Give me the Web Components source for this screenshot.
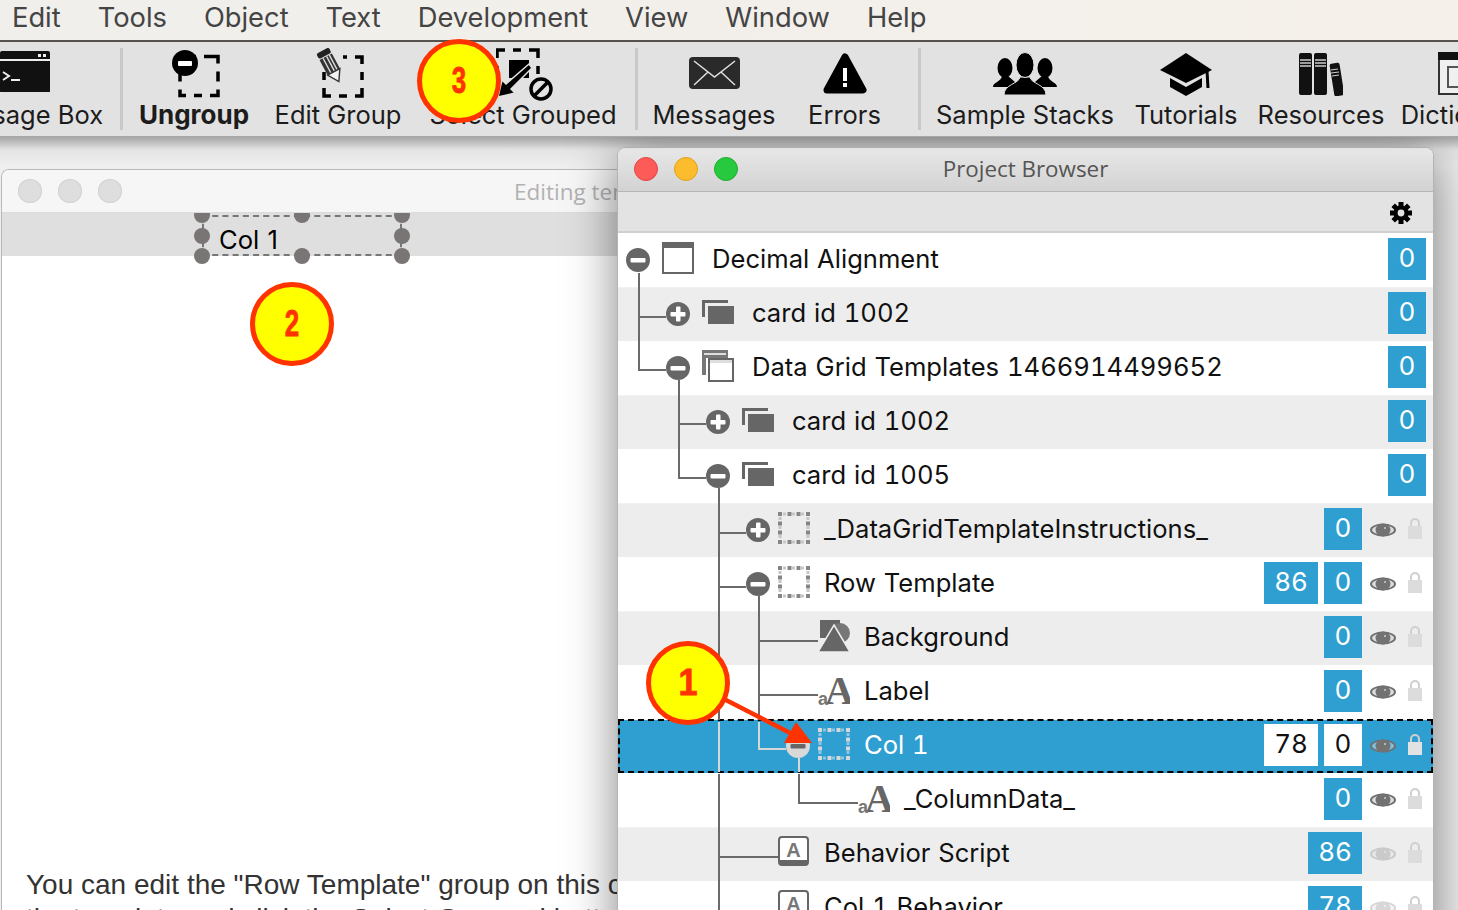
<!DOCTYPE html>
<html>
<head>
<meta charset="utf-8">
<title>Project Browser</title>
<style>
    html, body { margin: 0; height: 910px; overflow: hidden; background: #ebebeb; }
    body { font-family: Inter, "Liberation Sans", sans-serif; }
    #page { position: relative; width: 1458px; height: 910px; overflow: hidden; display: flex; flex-direction: column; }
    #arrow { position: absolute; left: 0; top: 0; }
    tool-item svg { display: block; }
</style>
</head>
<body>
<div id="page">
    <menu-bar>
        <span>Edit</span><span>Tools</span><span>Object</span><span>Text</span><span>Development</span><span>View</span><span>Window</span><span>Help</span>
    </menu-bar>

    <tool-bar>
        <tool-item w="164" style="margin-right:16px">
            <svg slot="icon" width="50" height="42" viewBox="0 0 50 42" style="margin-left:6px"><rect width="50" height="42" rx="2" fill="#111" y="1"/><rect y="9" width="50" height="2" fill="#eee"/><rect x="38" y="4" width="3" height="3" fill="#eee"/><rect x="43" y="4" width="3" height="3" fill="#eee"/><path d="M3 22l6 4-6 4" fill="none" stroke="#eee" stroke-width="2"/><rect x="11" y="29" width="9" height="2" fill="#eee"/></svg>
            Message Box
        </tool-item>
        <tool-sep></tool-sep>
        <tool-item w="142" bold>
            <svg slot="icon" width="48" height="48" viewBox="0 0 48 48" style="margin-left:4px"><path d="M8 14V7M16 7H24M32 7H46V14M46 22V32M46 40V46H38M30 46H22M14 46H8V40M8 32V24" transform="translate(0,-.5)" fill="none" stroke="#000" stroke-width="3.5"/><circle cx="13" cy="13" r="13" fill="#000"/><rect x="6" y="11" width="14" height="5" rx="1" fill="#fff"/></svg>
            Ungroup
        </tool-item>
        <tool-item w="146">
            <svg slot="icon" width="48" height="50" viewBox="0 0 48 50" style="margin-left:4px;margin-top:-2px"><path d="M8 24V32M8 40V48H15M23 48H31M39 48H46V40M46 32V24M46 16V9H39M31 9H27" fill="none" stroke="#000" stroke-width="3.5"/><g transform="translate(13,15) rotate(-28)"><rect x="-7" y="-14" width="14" height="6" rx="2" fill="#222"/><rect x="-7" y="-7" width="14" height="17" fill="#333"/><path d="M-3 -7V10M1 -7V10M4 -7V10" stroke="#ddd" stroke-width="1.4"/><path d="M-7 10H7L0 21Z" fill="#f2f2f2" stroke="#333" stroke-width="1.4"/></g></svg>
            Edit Group
        </tool-item>
        <tool-item w="224">
            <svg slot="icon" width="58" height="54" viewBox="0 0 58 54" style="margin-left:4px;margin-top:-2px"><path d="M1 10V2H9M17 2H25M33 2H42V10M42 18V26M1 18V26M1 34V44H9" fill="none" stroke="#000" stroke-width="3.5"/><rect x="13" y="12" width="20" height="18" fill="#000"/><path d="M33 16L10 36 6 32 2 49 19 45 15 41 36 20Z" fill="#000" stroke="#e2e2e2" stroke-width="1.5"/><circle cx="45" cy="41" r="10" fill="#e2e2e2" stroke="#000" stroke-width="3.5"/><path d="M38 48L52 34" stroke="#000" stroke-width="3.5"/></svg>
            Select Grouped
        </tool-item>
        <tool-sep></tool-sep>
        <tool-item w="152">
            <svg slot="icon" width="51" height="48" viewBox="0 0 51 48"><rect y="7" width="51" height="32" rx="4" fill="#2a2a2a"/><path d="M5 11L25.5 27 46 11M5 35L19 22M46 35L32 22" fill="none" stroke="#e0e0e0" stroke-width="1.5"/></svg>
            Messages
        </tool-item>
        <tool-item w="109" style="margin-right:19px">
            <svg slot="icon" width="46" height="48" viewBox="0 0 46 48"><path d="M23 7L41 40H5Z" fill="#000" stroke="#000" stroke-width="7" stroke-linejoin="round"/><rect x="21" y="18" width="4" height="13" fill="#fff"/><rect x="21" y="33" width="4" height="4" fill="#fff"/></svg>
            Errors
        </tool-item>
        <tool-sep></tool-sep>
        <tool-item w="208">
            <svg slot="icon" width="64" height="46" viewBox="0 0 64 46"><g fill="#000"><ellipse cx="12" cy="18" rx="7.5" ry="10"/><path d="M0 37C0 32 8 32 9 26H15L22 32 18 37Z"/><ellipse cx="52" cy="18" rx="7.5" ry="10"/><path d="M64 37C64 32 56 32 55 26H49L42 32 46 37Z"/><path d="M11 45C11 34 26 34 27 27H37C38 34 53 34 53 45Z" stroke="#e2e2e2" stroke-width="1"/><ellipse cx="32" cy="15" rx="9" ry="12.5" stroke="#e2e2e2" stroke-width="1"/></g></svg>
            Sample Stacks
        </tool-item>
        <tool-item w="114">
            <svg slot="icon" width="54" height="46" viewBox="0 0 54 46"><path d="M27 3L53 20 27 33 1 20Z" fill="#000"/><path d="M11 28L27 37 43 28V37L27 46 11 37Z" fill="#000"/><path d="M48 21L49 38" stroke="#000" stroke-width="3"/></svg>
            Tutorials
        </tool-item>
        <tool-item w="156">
            <svg slot="icon" width="44" height="46" viewBox="0 0 44 46"><rect y="3" width="13" height="42" rx="2" fill="#111"/><rect x="15" y="3" width="13" height="42" rx="2" fill="#111"/><rect x="33" y="13" width="10" height="33" rx="2" fill="#111" transform="rotate(-9 38 30)"/><path d="M1 10H12M1 13H12M1 16H12M16 10H27M16 13H27M16 16H27" stroke="#ccc" stroke-width="1.4"/><path d="M32 20L39 19M32 23L40 22M33 26L40 25" stroke="#ccc" stroke-width="1.2"/></svg>
            Resources
        </tool-item>
        <tool-item w="126">
            <svg slot="icon" width="56" height="46" viewBox="0 0 56 46" style="margin-left:8px"><rect x="1" y="3" width="54" height="41" fill="#f0f0f0" stroke="#333" stroke-width="2"/><rect y="2" width="56" height="8" fill="#111"/><rect x="10" y="17" width="36" height="20" fill="none" stroke="#555" stroke-width="2"/></svg>
            Dictionary
        </tool-item>
    </tool-bar>

    <desk-top>
        <editor-window title-text="Editing template">
            <selection-box>Col 1</selection-box>
            <span slot="note">You can edit the "Row Template" group on this card.</span>
            <span slot="note">the template and click the Select Grouped button to</span>
        </editor-window>

        <project-browser title-text="Project Browser">
            <tree-row label="Decimal Alignment" level="0" icon="stack" exp="minus" nums="0"></tree-row>
            <tree-row label="card id 1002" level="1" icon="card" exp="plus" nums="0"></tree-row>
            <tree-row label="Data Grid Templates 1466914499652" level="1" icon="cardopen" exp="minus" nums="0"></tree-row>
            <tree-row label="card id 1002" level="2" icon="card" exp="plus" nums="0"></tree-row>
            <tree-row label="card id 1005" level="2" icon="card" exp="minus" nums="0"></tree-row>
            <tree-row label="_DataGridTemplateInstructions_" level="3" icon="group" exp="plus" nums="0" eye="on"></tree-row>
            <tree-row label="Row Template" level="3" icon="group" exp="minus" nums="86,0" eye="on"></tree-row>
            <tree-row label="Background" level="4" icon="graphic" nums="0" eye="on"></tree-row>
            <tree-row label="Label" level="4" icon="field" nums="0" eye="on"></tree-row>
            <tree-row label="Col 1" level="4" icon="group" exp="minus" nums="78,0" eye="on" selected></tree-row>
            <tree-row label="_ColumnData_" level="5" icon="field" nums="0" eye="on"></tree-row>
            <tree-row label="Behavior Script" level="3" icon="script" nums="86" eye="off"></tree-row>
            <tree-row label="Col 1 Behavior" level="3" icon="script" nums="78" eye="off"></tree-row>
        </project-browser>
    </desk-top>

    <svg id="arrow" width="1458" height="910" viewBox="0 0 1458 910">
        <path d="M722 698L796 736" stroke="#ff3300" stroke-width="4.5"/>
        <path d="M796 722L812 743H784Z" fill="#ff3300"/>
    </svg>
    <call-out x="688" y="683">1</call-out>
    <call-out x="292" y="324" narrow>2</call-out>
    <call-out x="459" y="81" narrow>3</call-out>
</div>

<script>
class MenuBar extends HTMLElement {
    constructor() {
        super();
        this.attachShadow({ mode: 'open' });
        this.shadowRoot.innerHTML = `
            <style>
                :host {
                    display: flex;
                    flex: none;
                    gap: 37px;
                    height: 42px;
                    padding-left: 12px;
                    padding-bottom: 6px;
                    align-items: center;
                    box-sizing: border-box;
                    background: linear-gradient(90deg, #f0efeb, #f5f0ea);
                    border-bottom: 2px solid #55524f;
                    color: #444;
                    font: 400 27.3px Inter, "Liberation Sans", sans-serif;
                }
            </style>
            <slot></slot>
        `;
    }
}

class ToolBar extends HTMLElement {
    constructor() {
        super();
        this.attachShadow({ mode: 'open' });
        this.shadowRoot.innerHTML = `
            <style>
                :host {
                    display: flex;
                    flex: none;
                    height: 95px;
                    box-sizing: border-box;
                    margin-left: -60px;
                    width: 1560px;
                    padding-top: 8px;
                    background: #e2e2e2;
                    border-bottom: 1px solid #a8a8a8;
                }
            </style>
            <slot></slot>
        `;
    }
}

class ToolItem extends HTMLElement {
    constructor() {
        super();
        this.attachShadow({ mode: 'open' });
    }

    connectedCallback() {
        const width = this.getAttribute('w');
        const bold = this.hasAttribute('bold');
        this.shadowRoot.innerHTML = `
            <style>
                :host {
                    display: flex;
                    flex: none;
                    flex-direction: column;
                    align-items: center;
                    width: ${width}px;
                    white-space: nowrap;
                    color: #1c1c1c;
                    font: ${bold ? '700 26px' : '400 25.5px'} Inter, "Liberation Sans", sans-serif;
                }
                .icon { height: 48px; display: flex; align-items: flex-start; justify-content: center; }
                .text { line-height: 34px; }
            </style>
            <div class="icon"><slot name="icon"></slot></div>
            <div class="text"><slot></slot></div>
        `;
    }
}

class ToolSep extends HTMLElement {
    constructor() {
        super();
        this.attachShadow({ mode: 'open' });
        this.shadowRoot.innerHTML = `
            <style>
                :host {
                    display: block;
                    flex: none;
                    width: 3px;
                    height: 82px;
                    margin-top: -2px;
                    background: #c8c8c8;
                }
            </style>
        `;
    }
}

class DeskTop extends HTMLElement {
    constructor() {
        super();
        this.attachShadow({ mode: 'open' });
        this.shadowRoot.innerHTML = `
            <style>
                :host {
                    display: block;
                    position: relative;
                    flex: 1;
                    overflow: hidden;
                    background: linear-gradient(#bdbdbd 0, #e4e4e4 12px, #efefef 30px);
                }
                .shade { position: absolute; left: 0; right: 0; top: 0; height: 14px; background: linear-gradient(rgba(0,0,0,.12), rgba(0,0,0,0)); z-index: 5; }
            </style>
            <slot></slot>
            <div class="shade"></div>
        `;
    }
}

class EditorWindow extends HTMLElement {
    constructor() {
        super();
        this.attachShadow({ mode: 'open' });
    }

    connectedCallback() {
        // only the part left of the Project Browser shows, so the window stops at its edge
        this.shadowRoot.innerHTML = `
            <style>
                :host {
                    display: flex;
                    flex-direction: column;
                    position: absolute;
                    left: 1px;
                    top: 32px;
                    width: 616px;
                    height: 800px;
                    background: #fff;
                    border: 1px solid #b8b8b8;
                    border-right: 0;
                    border-radius: 8px 0 0 0;
                    overflow: hidden;
                }
                .title {
                    display: flex;
                    flex: none;
                    align-items: center;
                    height: 43px;
                    gap: 16px;
                    padding-left: 16px;
                    background: #f6f6f6;
                    border-bottom: 1px solid #dcdcdc;
                    box-sizing: border-box;
                    white-space: nowrap;
                    overflow: hidden;
                }
                .dot { flex: none; width: 24px; height: 24px; border-radius: 50%; background: #dedede; box-shadow: inset 0 0 0 1px #d2d2d2; }
                .name { margin-left: 376px; color: #b2b2b2; font: 22.5px "Open Sans", "Liberation Sans", sans-serif; }
                .header {
                    flex: none;
                    height: 43px;
                    background: #dfdfdf;
                    padding-left: 200px;
                    position: relative;
                    clip-path: inset(0 0 -20px 0);
                }
                .body { flex: 1; display: flex; flex-direction: column; justify-content: flex-end; padding: 0 0 0 24px; overflow: hidden; }
                .note { display: flex; flex-direction: column; margin-bottom: 34px; color: #333; font: 28px/34px "Liberation Sans", sans-serif; white-space: nowrap; }
                ::slotted(span) { display: block; }
            </style>
            <div class="title">
                <div class="dot"></div><div class="dot"></div><div class="dot"></div>
                <div class="name">${this.getAttribute('title-text')}</div>
            </div>
            <div class="header"><slot></slot></div>
            <div class="body"><div class="note"><slot name="note"></slot></div></div>
        `;
    }
}

class SelectionBox extends HTMLElement {
    constructor() {
        super();
        this.attachShadow({ mode: 'open' });
        const spots = [
            [0, 0], [50, 0], [100, 0],
            [0, 50], [100, 50],
            [0, 100], [50, 100], [100, 100]
        ];
        const handles = spots.map(s => `<i style="left:${s[0]}%;top:${s[1]}%"></i>`).join('');
        this.shadowRoot.innerHTML = `
            <style>
                :host {
                    display: block;
                    position: relative;
                    box-sizing: border-box;
                    width: 200px;
                    height: 41px;
                    margin-top: 2px;
                    padding: 0 0 0 15px;
                    border: 2px dashed #777;
                    color: #000;
                    font: 400 25.6px/45px Inter, "Liberation Sans", sans-serif;
                    word-spacing: 1px;
                }
                .handles { position: absolute; inset: -2px; }
                i {
                    position: absolute;
                    width: 16px;
                    height: 16px;
                    margin: -8px 0 0 -8px;
                    border-radius: 50%;
                    background: #787574;
                }
            </style>
            <slot></slot>
            <div class="handles">${handles}</div>
        `;
    }
}

class ProjectBrowser extends HTMLElement {
    constructor() {
        super();
        this.attachShadow({ mode: 'open' });
    }

    connectedCallback() {
        const dark = '#6a6a6a';
        const light = '#d6d6d6';
        this.shadowRoot.innerHTML = `
            <style>
                :host {
                    display: flex;
                    flex-direction: column;
                    position: absolute;
                    left: 618px;
                    top: 11px;
                    width: 815px;
                    height: 820px;
                    border-radius: 8px 8px 0 0;
                    background: #fff;
                    box-shadow: 0 0 0 1px #b4b4b4, 0 8px 50px rgba(0, 0, 0, .5);
                }
                .title {
                    display: flex;
                    flex: none;
                    position: relative;
                    align-items: center;
                    justify-content: center;
                    height: 44px;
                    padding-bottom: 2px;
                    box-sizing: border-box;
                    border-radius: 8px 8px 0 0;
                    border-bottom: 1px solid #b6b6b6;
                    background: linear-gradient(#e8e8e8, #d2d2d2);
                    color: #555;
                    font: 22.4px "Open Sans", "Liberation Sans", sans-serif;
                }
                .lights { position: absolute; left: 16px; top: 9px; display: flex; gap: 16px; }
                .lights i { width: 24px; height: 24px; border-radius: 50%; box-sizing: border-box; }
                .bar {
                    display: flex;
                    flex: none;
                    justify-content: flex-end;
                    align-items: center;
                    height: 41px;
                    box-sizing: border-box;
                    padding: 2px 21px 0 0;
                    background: #e3e3e3;
                    border-bottom: 2px solid #cfcfcf;
                }
                .rows { position: relative; display: block; }
                .lines { position: absolute; left: 0; top: 0; pointer-events: none; }
            </style>
            <div class="title">
                <div class="lights">
                    <i style="background:#fc5b57;border:1px solid #e2463f"></i>
                    <i style="background:#fdbc2e;border:1px solid #e1a116"></i>
                    <i style="background:#27c93f;border:1px solid #1dad2b"></i>
                </div>
                ${this.getAttribute('title-text')}
            </div>
            <div class="bar">
                <svg width="22" height="22" viewBox="0 0 22 22">
                    <g stroke="#000" stroke-width="5">
                        <path d="M11 0V22M0 11H22M3.2 3.2L18.8 18.8M18.8 3.2L3.2 18.8"/>
                    </g>
                    <circle cx="11" cy="11" r="7.5" fill="#000"/>
                    <circle cx="11" cy="11" r="3.4" fill="#e3e3e3"/>
                </svg>
            </div>
            <div class="rows">
                <slot></slot>
                <svg class="lines" width="815" height="702" viewBox="618 233 815 702" fill="none" stroke-width="2">
                    <path stroke="${dark}" d="M639 273V370H666M639 317H666"/>
                    <path stroke="${dark}" d="M679 380V478H706M679 424H706"/>
                    <path stroke="${dark}" d="M719 488V720M719 533H746M719 587H746"/>
                    <path stroke="${dark}" d="M759 596V720M759 641H818M759 695H818"/>
                    <path stroke="${light}" d="M759 722V749H786M719 722V772"/>
                    <path stroke="${light}" d="M799 758V772"/>
                    <path stroke="${dark}" d="M799 774V803H858"/>
                    <path stroke="${dark}" d="M719 774V935M719 857H778M719 911H778"/>
                </svg>
            </div>
        `;
    }
}

// the "group" icon is a ring of small squares, dark ones with paler ones between
function dottedSquare() {
    const dark = [0, 9.5, 18.5, 28];
    const pale = [5, 14, 23];
    let out = '';
    const dot = (x, y, size, fill) => `<rect x="${x}" y="${y}" width="${size}" height="${size}" fill="var(${fill})"/>`;
    dark.forEach(p => {
        out += dot(p, 0, 4, '--dots') + dot(p, 28, 4, '--dots');
        out += dot(0, p, 4, '--dots') + dot(28, p, 4, '--dots');
    });
    pale.forEach(p => {
        out += dot(p, 0.5, 3, '--dim') + dot(p, 28.5, 3, '--dim');
        out += dot(0.5, p, 3, '--dim') + dot(28.5, p, 3, '--dim');
    });
    return out;
}

const ROW_ICONS = {
    stack: `<rect x="1" y="1" width="30" height="30" fill="#fff" stroke="#666" stroke-width="2"/><rect width="32" height="6" fill="#666"/>`,
    card: `<path d="M0 4H26V7H3V21H0Z" fill="#666"/><rect x="6" y="10" width="26" height="18" fill="#666"/>`,
    cardopen: `<path d="M0 0H26V8H4V25H0Z" fill="#777"/><path d="M2 3H24V5H2Z" fill="#ddd"/><rect x="7" y="9" width="24" height="22" fill="#fff" stroke="#666" stroke-width="2"/><rect x="8" y="10" width="22" height="3" fill="#ddd"/>`,
    group: dottedSquare(),
    graphic: `<rect x="2" y="0" width="20" height="18" fill="#666"/><circle cx="22" cy="13" r="10" fill="#777"/><path d="M16 5L32 32H0Z" fill="#666" stroke="#eee" stroke-width="1.5"/>`,
    field: `<text x="7" y="30" font-family="Liberation Serif" font-weight="700" font-size="40" fill="#666">A</text><text x="0" y="31" font-family="Liberation Sans" font-weight="700" font-size="18" fill="#777">a</text>`,
    script: `<rect x="1" y="1" width="29" height="28" rx="3" fill="#fff" stroke="#666" stroke-width="2"/><rect x="1" y="24" width="29" height="5" rx="1" fill="#666"/><text x="15.5" y="21" text-anchor="middle" font-family="Liberation Sans" font-weight="700" font-size="20" fill="#777">A</text>`
};

class TreeRow extends HTMLElement {
    constructor() {
        super();
        this.attachShadow({ mode: 'open' });
    }

    connectedCallback() {
        const level = Number(this.getAttribute('level'));
        const selected = this.hasAttribute('selected');
        const exp = this.getAttribute('exp');
        const eye = this.getAttribute('eye');
        const nums = this.getAttribute('nums').split(',');
        // icon left edge per tree level, measured from the window's left side
        const iconLeft = [44, 84, 124, 160, 200, 240][level];
        const deep = level >= 3;

        const expander = exp ? `
            <svg class="exp" width="24" height="24" viewBox="0 0 24 24">
                <circle cx="12" cy="12" r="12" fill="${selected ? '#d8d8d8' : '#666'}"/>
                <rect x="4.5" y="10" width="15" height="4.5" rx="1" fill="${selected ? '#666' : '#fff'}"/>
                ${exp === 'plus' ? '<rect x="10" y="4.5" width="4.5" height="15" rx="1" fill="#fff"/>' : ''}
            </svg>` : '';

        const badges = nums.map(n => `<div class="badge ${n.length > 1 ? 'wide' : ''}">${n}</div>`).join('');

        const extras = eye ? `
            <svg class="eye ${eye}" width="26" height="14" viewBox="0 0 26 14">
                <ellipse cx="13" cy="7" rx="13" ry="6.5" fill="#6f6f6f"/>
                <ellipse cx="13" cy="7" rx="11" ry="4.5" fill="${selected ? '#7fc0e0' : '#ddd'}"/>
                <ellipse cx="13" cy="7" rx="7.5" ry="6.5" fill="#727272"/>
                <circle cx="15" cy="5" r="1" fill="#ccc"/>
            </svg>
            <svg class="lock" width="14" height="21" viewBox="0 0 14 21">
                <path d="M3 9V5a4 4 0 0 1 8 0V9" fill="none" stroke="#cfcfcf" stroke-width="2"/>
                <rect y="8" width="14" height="13" fill="${selected ? '#e2e2e2' : '#dcdcdc'}"/>
            </svg>` : '';

        this.shadowRoot.innerHTML = `
            <style>
                :host {
                    display: flex;
                    align-items: center;
                    height: 54px;
                    box-sizing: border-box;
                    padding-right: ${eye ? 11 : 7}px;
                    background: #fff;
                    color: #111;
                    --dots: #858585;
                    --dim: #c6c6c6;
                    font: 400 25.6px Inter, "Liberation Sans", sans-serif;
                    font-variant-numeric: tabular-nums;
                    word-spacing: 1px;
                }
                :host(:nth-child(even)) {
                    background: #ededed;
                    box-shadow: inset 0 1px 0 #f2f2f2;
                }
                :host([selected]) {
                    background: #2f9fd2 !important;
                    color: #fff;
                    outline: 2px dashed #000;
                    outline-offset: -2px;
                    --dots: #d8d8d8;
                    --dim: #8cc6e2;
                }
                .lead {
                    display: flex;
                    flex: none;
                    justify-content: flex-end;
                    width: ${iconLeft}px;
                }
                .exp { margin-right: ${deep ? 8 : 12}px; }
                .icon { flex: none; margin-top: -5px; }
                .label { margin-left: ${deep ? 14 : 18}px; padding-bottom: 4px; white-space: nowrap; flex: 1; }
                .badge {
                    flex: none;
                    width: 38px;
                    height: 42px;
                    margin-left: 6px;
                    margin-top: -2px;
                    background: #2f9fd2;
                    color: #fff;
                    text-align: center;
                    font-size: 26px;
                    line-height: 39px;
                }
                .badge.wide { width: 54px; }
                :host([selected]) .badge { background: #fff; color: #111; }
                .eye { flex: none; margin-left: 8px; }
                .eye.off { opacity: .28; }
                .lock { flex: none; margin-left: 12px; margin-top: -4px; }
            </style>
            <div class="lead">${expander}</div>
            <svg class="icon" width="32" height="32" viewBox="0 0 32 32">${ROW_ICONS[this.getAttribute('icon')]}</svg>
            <div class="label">${this.getAttribute('label')}</div>
            ${badges}
            ${extras}
        `;
    }
}

class CallOut extends HTMLElement {
    constructor() {
        super();
        this.attachShadow({ mode: 'open' });
    }

    connectedCallback() {
        const x = Number(this.getAttribute('x'));
        const y = Number(this.getAttribute('y'));
        const squeeze = this.hasAttribute('narrow') ? 0.72 : 0.95;
        this.shadowRoot.innerHTML = `
            <style>
                :host {
                    display: flex;
                    position: absolute;
                    left: ${x - 42}px;
                    top: ${y - 42}px;
                    width: 84px;
                    height: 84px;
                    box-sizing: border-box;
                    align-items: center;
                    justify-content: center;
                    border: 5px solid #ff3300;
                    border-radius: 50%;
                    background: #ffff00;
                    color: #ff3300;
                    font: 700 36px "Liberation Sans", sans-serif;
                }
                span { display: block; transform: scaleX(${squeeze}); -webkit-text-stroke: .8px #ff3300; }
            </style>
            <span><slot></slot></span>
        `;
    }
}

customElements.define('menu-bar', MenuBar);
customElements.define('tool-bar', ToolBar);
customElements.define('tool-item', ToolItem);
customElements.define('tool-sep', ToolSep);
customElements.define('desk-top', DeskTop);
customElements.define('editor-window', EditorWindow);
customElements.define('selection-box', SelectionBox);
customElements.define('project-browser', ProjectBrowser);
customElements.define('tree-row', TreeRow);
customElements.define('call-out', CallOut);
</script>
</body>
</html>
